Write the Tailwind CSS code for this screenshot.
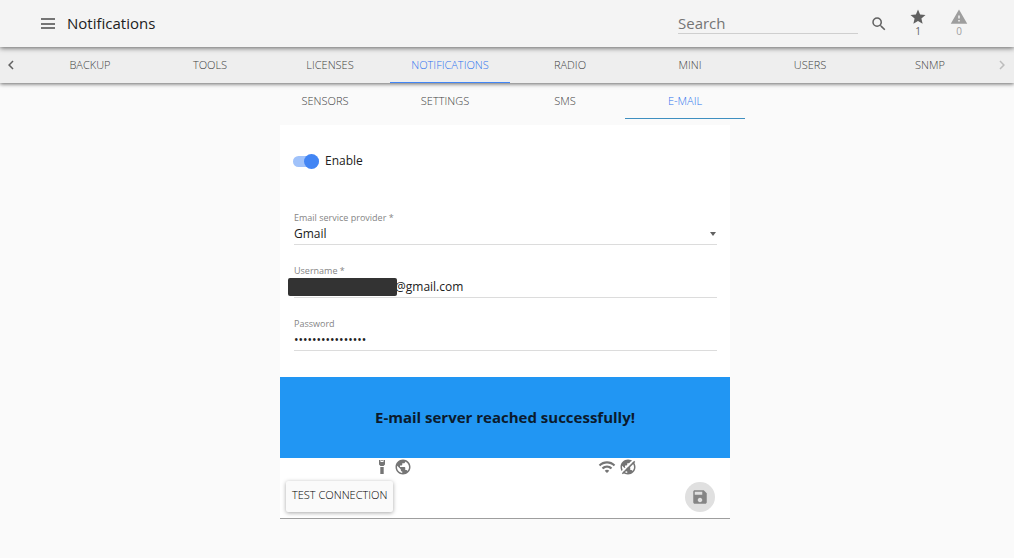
<!DOCTYPE html>
<html lang="en">
<head>
    <meta charset="UTF-8">
    <meta name="viewport" content="width=device-width, initial-scale=1.0">
    <title>Notifications</title>
    <script src="https://cdn.jsdelivr.net/npm/@tailwindcss/browser@4"></script>
</head>
<body class="bg-[#fafafa] min-h-screen font-['Open_Sans',sans-serif] text-[12px] text-[#212121]">
    <header class="relative z-20 flex items-center h-[47px] pl-10 pr-[46px] bg-[#f4f4f4] shadow-[0_1px_5px_rgba(0,0,0,0.6)]">
        <button type="button" aria-label="Menu" class="w-4 h-4 text-[#757575]">
            <svg viewBox="0 0 16 16" class="w-4 h-4" fill="currentColor"><path d="M1 2h14v2H1zM1 7h14v2H1zM1 11h14v2H1z"/></svg>
        </button>
        <h1 class="ml-[11px] text-[15px]">Notifications</h1>
        <input type="search" aria-label="Search" placeholder="Search" class="ml-auto w-[180px] h-5 text-[15px] bg-transparent border-b border-[#cfcfcf] outline-none placeholder:text-[#757575]">
        <button type="button" aria-label="Search" class="ml-3 w-[18px] h-[18px] text-[#616161]">
            <svg viewBox="0 0 24 24" class="w-[18px] h-[18px]" fill="currentColor"><path d="M15.5 14h-.79l-.28-.27A6.47 6.47 0 0 0 16 9.5 6.5 6.5 0 1 0 9.5 16c1.61 0 3.09-.59 4.23-1.57l.27.28v.79l5 4.99L20.49 19l-4.99-5zm-6 0C7.01 14 5 11.99 5 9.5S7.01 5 9.5 5 14 7.01 14 9.5 11.99 14 9.5 14z"/></svg>
        </button>
        <button type="button" class="ml-[21px] pb-[3px] w-[18px] flex flex-col items-center text-[10px] leading-[10px] text-[#616161]">
            <svg viewBox="0 0 24 24" class="w-[18px] h-[18px]" fill="currentColor"><path d="M12 17.27 18.18 21l-1.64-7.03L22 9.24l-7.19-.61L12 2 9.19 8.63 2 9.24l5.46 4.73L5.82 21z"/></svg>
            1
        </button>
        <button type="button" class="ml-[23px] pb-[3px] w-[18px] flex flex-col items-center text-[10px] leading-[10px] text-[#9e9e9e]">
            <svg viewBox="0 0 24 24" class="w-[18px] h-[18px]" fill="currentColor"><path d="M1 21h22L12 2 1 21zm12-3h-2v-2h2v2zm0-4h-2v-4h2v4z"/></svg>
            0
        </button>
    </header>

    <nav class="relative z-10 flex h-9 bg-[#eeeeee] text-[11px] font-light text-[#424242] shadow-[0_1px_4px_rgba(0,0,0,0.6)]">
        <button type="button" aria-label="Previous" class="w-[30px] pl-[2px] text-[#616161]">
            <svg viewBox="0 0 24 24" class="w-[18px] h-[18px]" fill="currentColor"><path d="M15.41 7.41 14 6l-6 6 6 6 1.41-1.41L10.83 12z"/></svg>
        </button>
        <div class="flex-1 grid grid-cols-8 leading-9">
            <a href="#" class="text-center">BACKUP</a>
            <a href="#" class="text-center">TOOLS</a>
            <a href="#" class="text-center">LICENSES</a>
            <a href="#" class="h-9 text-center text-[#2f74ee] border-b border-b-[#4285f4]">NOTIFICATIONS</a>
            <a href="#" class="text-center">RADIO</a>
            <a href="#" class="text-center">MINI</a>
            <a href="#" class="text-center">USERS</a>
            <a href="#" class="text-center">SNMP</a>
        </div>
        <button type="button" aria-label="Next" class="w-6 pl-[3px] text-[#bdbdbd]">
            <svg viewBox="0 0 24 24" class="w-[18px] h-[18px]" fill="currentColor"><path d="M10 6 8.59 7.41 13.17 12l-4.58 4.59L10 18l6-6z"/></svg>
        </button>
    </nav>

    <main class="flex flex-col items-center pr-1">
        <nav class="grid grid-cols-4 w-full max-w-[480px] h-9 leading-9 text-[11px] font-light text-[#424242]">
            <a href="#" class="text-center">SENSORS</a>
            <a href="#" class="text-center">SETTINGS</a>
            <a href="#" class="text-center">SMS</a>
            <a href="#" class="h-9 text-center text-[#2f74ee] border-b border-b-[#3f8fc0]">E-MAIL</a>
        </nav>

        <form class="mt-[6px] w-full max-w-[450px] bg-white border-b border-[#9e9e9e]">
            <label class="flex items-center pt-7 px-[13px] h-[44px]">
                <input type="checkbox" role="switch" checked class="peer sr-only">
                <span class="flex items-center justify-end w-[26px] h-[11px] rounded-full bg-[#a0c2fa]">
                    <span class="w-[15px] h-[15px] shrink-0 rounded-full bg-[#4285f4]"></span>
                </span>
                <span class="ml-[6px]">Enable</span>
            </label>

            <div class="flex flex-col gap-5 pt-[43px] pb-[26px] pl-[14px] pr-[13px]">
                <div class="relative">
                    <label for="provider" class="block text-[9px] leading-3 text-[#858585]">Email service provider *</label>
                    <select id="provider" class="appearance-none block w-full h-[21px] border-b border-[#dcdcdc] outline-none">
                        <option>Gmail</option>
                    </select>
                    <svg viewBox="0 0 6 4" class="absolute right-[1px] top-[20px] w-[6px] h-1 pointer-events-none" fill="#616161"><path d="M0 0h6L3 4z"/></svg>
                </div>
                <div class="relative">
                    <label for="username" class="block text-[9px] leading-3 text-[#858585]">Username *</label>
                    <input id="username" type="text" value="@gmail.com" class="block w-full h-[21px] pl-[101px] pb-[2px] border-b border-[#dcdcdc] outline-none">
                    <span class="absolute -left-[6px] top-[13px] w-[109px] h-[18px] rounded-[2px] bg-[#333333]"></span>
                </div>
                <div>
                    <label for="password" class="block text-[9px] leading-3 text-[#858585]">Password</label>
                    <input id="password" type="password" value="1234567890123456" class="block w-full h-[21px] pb-[2px] border-b border-[#dcdcdc] outline-none">
                </div>
            </div>

            <div role="status" class="h-[81px] flex items-center justify-center bg-[#2196f3] text-[15px] font-bold text-[#0b1a2c]">E-mail server reached successfully!</div>

            <div class="grid grid-cols-2 h-[18px] text-[#757575]">
                <div class="flex items-center justify-center gap-[3px]">
                    <svg viewBox="0 0 18 18" class="w-[18px] h-[18px]" fill="currentColor"><path d="M6 2h1.500v2h3V2H12v4.500L10.500 8h-3L6 6.500zM8.300 2h1.400v1H8.300zM7.300 9h3.400v7H7.300z"/></svg>
                    <svg viewBox="0 0 24 24" class="w-[18px] h-[18px]" fill="currentColor"><path d="M12 2C6.48 2 2 6.48 2 12s4.48 10 10 10 10-4.48 10-10S17.52 2 12 2zm-1 17.93c-3.95-.49-7-3.85-7-7.93 0-.62.08-1.21.21-1.79L9 15v1c0 1.1.9 2 2 2v1.93zm6.9-2.54c-.26-.81-1-1.39-1.9-1.39h-1v-3c0-.55-.45-1-1-1H8v-2h2c.55 0 1-.45 1-1V7h2c1.1 0 2-.9 2-2v-.41c2.93 1.19 5 4.06 5 7.41 0 2.08-.8 3.97-2.1 5.39z"/></svg>
                </div>
                <div class="flex items-center justify-center gap-[3px]">
                    <svg viewBox="0 0 24 24" class="w-[18px] h-[18px]" fill="currentColor"><path d="m1 9 2 2c4.970-4.970 13.030-4.970 18 0l2-2C16.930 2.930 7.080 2.930 1 9zm8 8 3 3 3-3c-1.650-1.660-4.340-1.660-6 0zm-4-4 2 2c2.760-2.760 7.240-2.760 10 0l2-2C15.140 9.140 8.870 9.140 5 13z"/></svg>
                    <svg viewBox="0 0 24 24" class="w-[18px] h-[18px]" fill="currentColor"><path d="M12 2C6.48 2 2 6.48 2 12s4.48 10 10 10 10-4.48 10-10S17.52 2 12 2zm-1 17.93c-3.95-.49-7-3.85-7-7.93 0-.62.08-1.21.21-1.79L9 15v1c0 1.1.9 2 2 2v1.93zm6.9-2.54c-.26-.81-1-1.39-1.9-1.39h-1v-3c0-.55-.45-1-1-1H8v-2h2c.55 0 1-.45 1-1V7h2c1.1 0 2-.9 2-2v-.41c2.93 1.19 5 4.06 5 7.41 0 2.08-.8 3.97-2.1 5.39z"/><path d="M3 19.5 19.5 3" stroke="#fff" stroke-width="2.5"/><path d="M4.5 21 21 4.5" stroke="currentColor" stroke-width="2"/></svg>
                </div>
            </div>

            <div class="flex items-center justify-between pl-[6px] pr-[15px] pt-[5px] pb-[6px]">
                <button type="button" class="h-[31px] px-[6px] pb-[3px] text-[11px] font-light text-black bg-[#fafafa] rounded-[2px] shadow-[0_1px_4px_rgba(0,0,0,0.35)]">TEST CONNECTION</button>
                <button type="submit" aria-label="Save" class="w-[30px] h-[30px] flex items-center justify-center rounded-full bg-[#e0e0e0] text-[#858585]">
                    <svg viewBox="0 0 24 24" class="w-[18px] h-[18px]" fill="currentColor"><path d="M17 3H5c-1.11 0-2 .9-2 2v14c0 1.1.89 2 2 2h14c1.1 0 2-.9 2-2V7l-4-4zm-5 16c-1.66 0-3-1.34-3-3s1.34-3 3-3 3 1.34 3 3-1.34 3-3 3zm3-10H5V5h10v4z"/></svg>
                </button>
            </div>
        </form>
    </main>
</body>
</html>
